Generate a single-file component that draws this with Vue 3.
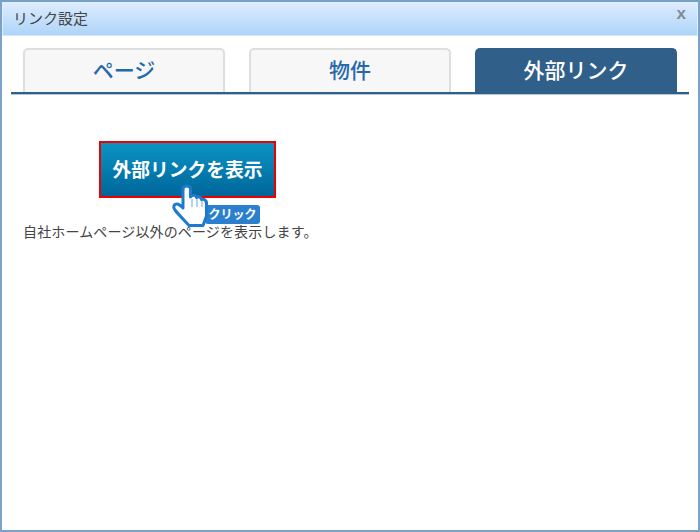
<script setup>
const tabs = [
  { label: 'ページ', active: false },
  { label: '物件', active: false },
  { label: '外部リンク', active: true },
]
</script>

<template>
  <div class="window">
    <header class="titlebar">
      <span class="title">リンク設定</span>
      <span class="close">x</span>
    </header>
    <nav class="tabs">
      <div v-for="t in tabs" :key="t.label" class="tab" :class="{ active: t.active }">{{ t.label }}</div>
    </nav>
    <main class="body">
      <div class="btn-wrap">
        <div class="cta">外部リンクを表示</div>
        <div class="badge">クリック</div>
        <svg class="hand" width="42" height="52" viewBox="0 0 42 52">
          <path d="M12 9 C12 5 19.5 5 19.5 9 L19.5 17 C22 14.5 25 15 25.5 17.5 C27.5 16 30 17 30.5 19.5 C32.5 18.5 35.5 20 35.5 23.5 L35.5 36 L32 45.5 L18 45.5 C14 41 7 34 4 30 C1.5 27 3 24 6 24 C8 24 10 26 12 28 Z" fill="#fff" stroke="#1c7bd0" stroke-width="3" stroke-linejoin="round"/>
          <path d="M21 19 L21 27 M26 19 L26 27 M31 21 L31 27" stroke="#7db6e6" stroke-width="1.2" fill="none"/>
        </svg>
      </div>
      <p class="desc">自社ホームページ以外のページを表示します。</p>
    </main>
  </div>
</template>

<style>
html, body { margin: 0; background: #fff; }
</style>

<style scoped>
.window {
  box-sizing: border-box;
  width: 700px;
  height: 532px;
  border: 2px solid #7ba3c9;
  border-top-color: #76a0c4;
  background: #fff;
  display: flex;
  flex-direction: column;
  font-family: "Noto Sans CJK JP", "Liberation Sans", sans-serif;
}
.titlebar {
  box-sizing: border-box;
  height: 34px;
  flex: none;
  border: 1px solid #e2eefb;
  border-bottom: 1px solid #d5e6f8;
  background: linear-gradient(#dcecfe, #aed4f8);
  display: flex;
  align-items: center;
  justify-content: space-between;
  padding: 0 10px 3px 10px;
}
.title { font-size: 15px; color: #444; }
.close {
  font: bold 17px "Liberation Sans", sans-serif;
  color: #7f8b96;
  margin-top: -8px;
  margin-right: 1px;
}
.tabs {
  display: flex;
  gap: 24px;
  margin: 12px 9px 0;
  padding-left: 12px;
  border-bottom: 2px solid #305f8a;
  box-shadow: 0 1px 0 #b4c6d8;
}
.tab {
  box-sizing: border-box;
  width: 202px;
  height: 44px;
  border: 2px solid #dedede;
  border-bottom: 0;
  border-radius: 5px 5px 0 0;
  background: #f7f7f7;
  color: #2568ac;
  font-size: 21px;
  font-weight: 500;
  line-height: 38px;
  text-align: center;
}
.tab.active {
  background: #305f8a;
  border-color: #305f8a;
  color: #fff;
}
.body { flex: 1; padding: 47px 21px 0; }
.btn-wrap { position: relative; margin-left: 76px; width: 177px; height: 57px; }
.cta {
  box-sizing: border-box;
  width: 177px;
  height: 57px;
  border: 2px solid #ee0000;
  background: linear-gradient(#0a94c4, #00669a);
  color: #fff;
  font-size: 18.75px;
  font-weight: 700;
  line-height: 51px;
  text-align: center;
  white-space: nowrap;
}
.badge {
  position: absolute;
  left: 106px;
  top: 64px;
  width: 55px;
  height: 19px;
  border-radius: 3px;
  background: #2a80cf;
  color: #fff;
  font-size: 12px;
  font-weight: 700;
  line-height: 18px;
  text-align: center;
  white-space: nowrap;
}
.hand { position: absolute; left: 72px; top: 39px; z-index: 1; }
.desc {
  margin: 26px 0 0;
  font-size: 14px;
  letter-spacing: 0.14px;
  line-height: 14px;
  color: #444;
  white-space: nowrap;
}
</style>
